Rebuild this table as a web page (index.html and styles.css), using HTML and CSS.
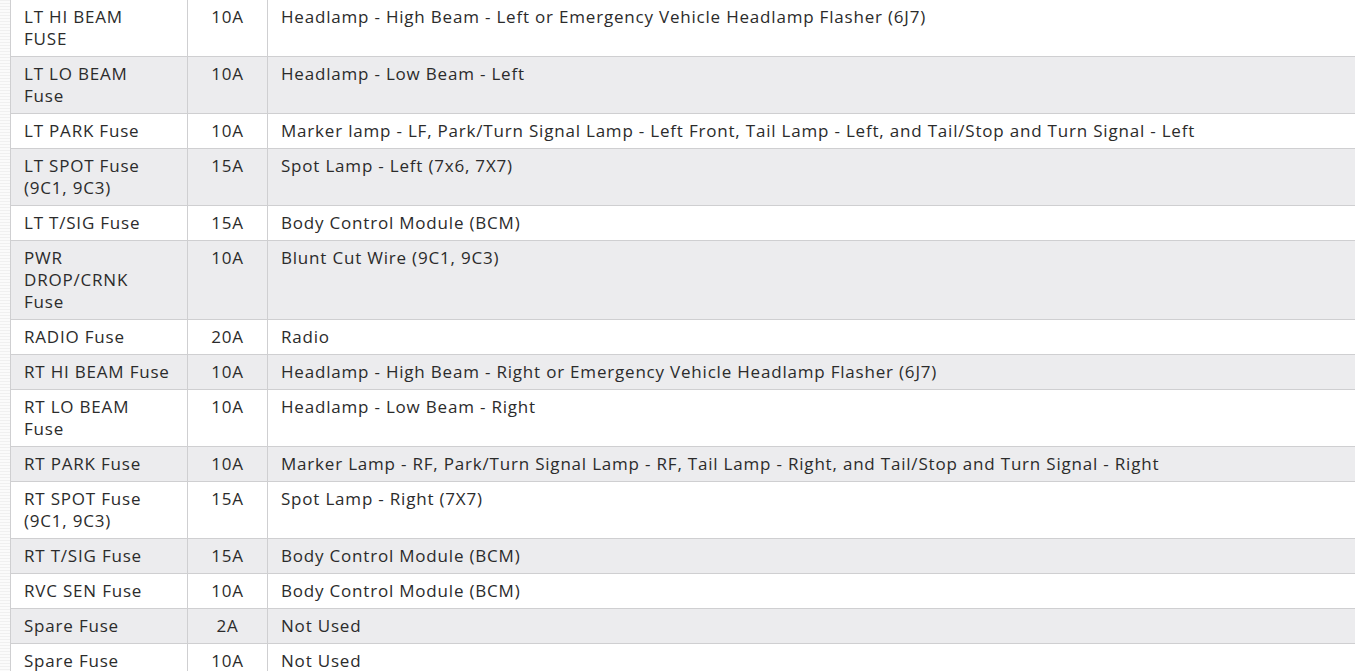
FILE: index.html
```html
<!DOCTYPE html>
<html>
<head>
<meta charset="utf-8">
<link rel="stylesheet" href="styles.css">
</head>
<body>
<div class="page">
<table class="fuses">
<colgroup><col class="c-name"><col class="c-amp"><col class="c-desc"></colgroup>
<tbody>
<tr><td>LT HI BEAM<br>FUSE</td><td class="amp">10A</td><td>Headlamp - High Beam - Left or Emergency Vehicle Headlamp Flasher (6J7)</td></tr>
<tr><td>LT LO BEAM<br>Fuse</td><td class="amp">10A</td><td>Headlamp - Low Beam - Left</td></tr>
<tr><td>LT PARK Fuse</td><td class="amp">10A</td><td>Marker lamp - LF, Park/Turn Signal Lamp - Left Front, Tail Lamp - Left, and Tail/Stop and Turn Signal - Left</td></tr>
<tr><td>LT SPOT Fuse (9C1, 9C3)</td><td class="amp">15A</td><td>Spot Lamp - Left (7x6, 7X7)</td></tr>
<tr><td>LT T/SIG Fuse</td><td class="amp">15A</td><td>Body Control Module (BCM)</td></tr>
<tr><td>PWR<br>DROP/CRNK<br>Fuse</td><td class="amp">10A</td><td>Blunt Cut Wire (9C1, 9C3)</td></tr>
<tr><td>RADIO Fuse</td><td class="amp">20A</td><td>Radio</td></tr>
<tr><td>RT HI BEAM Fuse</td><td class="amp">10A</td><td>Headlamp - High Beam - Right or Emergency Vehicle Headlamp Flasher (6J7)</td></tr>
<tr><td>RT LO BEAM<br>Fuse</td><td class="amp">10A</td><td>Headlamp - Low Beam - Right</td></tr>
<tr><td>RT PARK Fuse</td><td class="amp">10A</td><td>Marker Lamp - RF, Park/Turn Signal Lamp - RF, Tail Lamp - Right, and Tail/Stop and Turn Signal - Right</td></tr>
<tr><td>RT SPOT Fuse<br>(9C1, 9C3)</td><td class="amp">15A</td><td>Spot Lamp - Right (7X7)</td></tr>
<tr><td>RT T/SIG Fuse</td><td class="amp">15A</td><td>Body Control Module (BCM)</td></tr>
<tr><td>RVC SEN Fuse</td><td class="amp">10A</td><td>Body Control Module (BCM)</td></tr>
<tr><td>Spare Fuse</td><td class="amp">2A</td><td>Not Used</td></tr>
<tr><td>Spare Fuse</td><td class="amp">10A</td><td>Not Used</td></tr>
</tbody>
</table>
</div>
</body>
</html>
```
FILE: styles.css
```css
html, body {
  margin: 0;
  padding: 0;
  overflow: hidden;
}
body {
  background-color: #fbfbfb;
  background-image: repeating-linear-gradient(0deg, #f0f0f0 0 1px, transparent 1px 3px);
  font-family: "Open Sans", "Liberation Sans", sans-serif;
  color: #2b2b2b;
}
.page {
  padding-left: 10px;
}
.fuses {
  border-collapse: collapse;
  table-layout: fixed;
  width: 1420px;
  background: #fff;
  font-size: 17px;
  line-height: 22px;
  letter-spacing: 0.8px;
}
.c-name { width: 177px; }
.c-amp { width: 80px; }
.fuses td {
  border-left: 1px solid #cfcfd1;
  border-bottom: 1px solid #cfcfd1;
  padding: 6px 13px;
  vertical-align: top;
}
.fuses tr:nth-child(even) td {
  background: #ececee;
}
.fuses td.amp {
  text-align: center;
  padding-left: 4px;
  padding-right: 4px;
}
```
